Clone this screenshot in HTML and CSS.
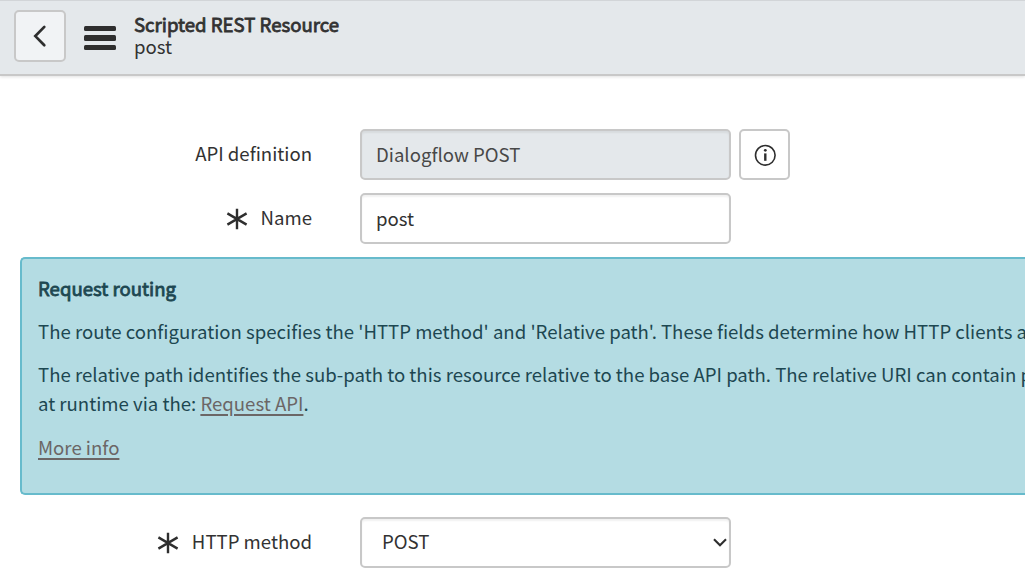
FILE: index.html
```html
<!DOCTYPE html>
<html lang="en">
<head>
<meta charset="utf-8">
<title>Scripted REST Resource</title>
<link rel="stylesheet" href="styles.css">
</head>
<body>
<header class="header">
  <button class="back" aria-label="Back"><svg width="52" height="52" viewBox="0 0 52 52"><path d="M30.3 16.9 21.3 26.1 30.3 35.3"/></svg></button>
  <button class="menu" aria-label="Menu"><span></span><span></span><span></span></button>
  <div class="heading">
    <h1 class="title">Scripted REST Resource</h1>
    <div class="subtitle">post</div>
  </div>
</header>
<main class="form">
  <div class="row">
    <label class="label" for="api"><span>API definition</span></label>
    <input class="control readonly" id="api" value="Dialogflow POST" readonly>
    <button class="info" aria-label="Preview record"><svg width="22" height="22" viewBox="0 0 22 22"><circle cx="11.3" cy="11.3" r="9.8"/><path d="M11.3 9.4V16.8"/><circle class="dot" cx="11.3" cy="6.3" r="1.4"/></svg></button>
  </div>
  <div class="row">
    <label class="label" for="name"><svg class="required" viewBox="0 0 22 22"><path d="M11 .7V21.3M1.4 5.4 20.6 16.6M20.6 5.4 1.4 16.6"/></svg><span>Name</span></label>
    <input class="control" id="name" value="post">
  </div>
  <section class="notice">
    <h2 class="notice-title">Request routing</h2>
    <p class="notice-text">The route configuration specifies the 'HTTP method' and 'Relative path'. These fields determine how HTTP clients a</p>
    <p class="notice-text">The relative path identifies the sub-path to this resource relative to the base API path. The relative URI can contain p<br>at runtime via the: <a class="link" href="#">Request API</a>.</p>
    <p class="notice-text more"><a class="link" href="#">More info</a></p>
  </section>
  <div class="row">
    <label class="label" for="method"><svg class="required" viewBox="0 0 22 22"><path d="M11 .7V21.3M1.4 5.4 20.6 16.6M20.6 5.4 1.4 16.6"/></svg><span>HTTP method</span></label>
    <div class="control select" id="method"><span>POST</span><svg width="14" height="9" viewBox="0 0 14 9"><path d="M1 1.2 7 7.2 13 1.2"/></svg></div>
  </div>
</main>
</body>
</html>
```
FILE: styles.css
```css
* { box-sizing: border-box; }
body {
  margin: 0;
  height: 581px;
  overflow: hidden;
  background: #fff;
  color: #323232;
  font: 18.6px/29px "Noto Sans CJK SC", "Noto Sans", sans-serif;
}
button { padding: 0; font: inherit; color: inherit; }
svg { display: block; fill: none; stroke: #2e2e2e; }
.header {
  display: flex;
  align-items: flex-start;
  height: 76px;
  padding: 9px 14px 0;
  background: #e4e8eb;
  border-top: 1px solid #d2d5d8;
  border-bottom: 2px solid #c8c8c8;
  box-shadow: 0 1px 3px rgba(0, 0, 0, .12);
}
.back {
  width: 52px;
  height: 52px;
  background: #f1f3f5;
  border: 2px solid #c8c8c8;
  border-radius: 5px;
}
.back svg { margin: -2px; stroke-width: 2.7; stroke-linecap: round; }
.menu {
  display: flex;
  flex-direction: column;
  gap: 4px;
  width: 32px;
  margin: 16px 18px 0;
  background: none;
  border: 0;
}
.menu span { width: 32px; height: 5.4px; border-radius: 1.5px; background: #2e2e2e; }
.heading { padding-top: 2px; line-height: 23px; }
.title { margin: 0 0 -1px; font-size: inherit; font-weight: 400; line-height: 23px; -webkit-text-stroke: .8px; }
.form { padding: 53px 0 0 20px; }
.row { display: flex; height: 51px; margin-bottom: 13px; }
.label {
  display: flex;
  justify-content: flex-end;
  width: 292px;
  margin-right: 48px;
  padding-top: 9px;
}
.required { width: 22px; height: 22px; margin: 6px 12.5px 0 0; stroke-width: 2.4; }
.control {
  width: 371px;
  height: 51px;
  padding: 0 14px 2px;
  border: 2px solid #c8c8c8;
  border-radius: 5px;
  outline: 0;
  background: #fff;
  color: inherit;
  font: inherit;
  box-shadow: inset 0 2px 2px rgba(0, 0, 0, .06);
}
.readonly { background: #e4e8eb; color: #484848; }
.info {
  display: flex;
  align-items: center;
  justify-content: center;
  width: 51px;
  height: 51px;
  margin-left: 8px;
  background: #fff;
  border: 2px solid #c8c8c8;
  border-radius: 5px;
}
.info svg { stroke-width: 1.6; overflow: visible; }
.info path { stroke-width: 2.4; }
.info .dot { fill: #2e2e2e; stroke: none; }
.notice {
  height: 238px;
  margin-bottom: 22px;
  padding: 14px 16px;
  overflow: hidden;
  white-space: nowrap;
  color: #1d4751;
  background: #b4dce3;
  border: 2px solid #67bbcc;
  border-right: 0;
  border-radius: 5px 0 0 5px;
}
.notice-title { margin: 0 0 14px; font-size: inherit; font-weight: 400; line-height: 29px; -webkit-text-stroke: .8px; }
.notice-text { margin: 0 0 14px; }
.more { padding-top: 1px; }
.link { color: #6b6666; text-decoration: underline; text-decoration-thickness: 2px; text-underline-offset: 3px; }
.select { display: flex; align-items: center; justify-content: space-between; padding: 0 2px 4px 20px; }
.select svg { margin-top: 4px; stroke-width: 2.1; }
```
